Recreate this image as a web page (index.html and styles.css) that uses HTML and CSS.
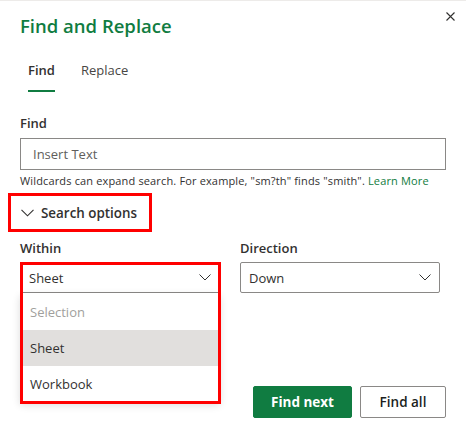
FILE: index.html
```html
<!DOCTYPE html>
<html lang="en">
<head>
<meta charset="utf-8">
<title>Find and Replace</title>
<link rel="stylesheet" href="styles.css">
</head>
<body>
<div class="dialog">
  <button class="close" aria-label="Close">
    <svg width="9" height="9" viewBox="0 0 9 9"><path d="M0.5 0.5L8.5 8.5M8.5 0.5L0.5 8.5" stroke="#323130" stroke-width="1.1" fill="none"/></svg>
  </button>
  <h1 class="title">Find and Replace</h1>
  <div class="tabs">
    <span class="tab active">Find</span>
    <span class="tab">Replace</span>
  </div>
  <label class="label first">Find</label>
  <div class="input">Insert Text</div>
  <p class="hint">Wildcards can expand search. For example, "sm?th" finds "smith". <a class="link">Learn More</a></p>
  <div class="options">
    <svg class="chev" width="13" height="8" viewBox="0 0 13 8"><path d="M0.5 0.8L6.5 6.8L12.5 0.8" stroke="#323130" stroke-width="1.1" fill="none"/></svg>
    <span>Search options</span>
  </div>
  <div class="grid">
    <div class="field">
      <label class="label">Within</label>
      <div class="combo-wrap">
        <div class="combo">
          <span>Sheet</span>
          <svg width="12" height="7" viewBox="0 0 12 7"><path d="M0.5 0.5L6 6L11.5 0.5" stroke="#323130" stroke-width="1" fill="none"/></svg>
        </div>
        <ul class="menu">
          <li class="disabled">Selection</li>
          <li class="selected">Sheet</li>
          <li>Workbook</li>
        </ul>
        <div class="mark"></div>
      </div>
    </div>
    <div class="field">
      <label class="label">Direction</label>
      <div class="combo">
        <span>Down</span>
        <svg width="12" height="7" viewBox="0 0 12 7"><path d="M0.5 0.5L6 6L11.5 0.5" stroke="#323130" stroke-width="1" fill="none"/></svg>
      </div>
    </div>
  </div>
  <div class="actions">
    <button class="btn primary">Find next</button>
    <button class="btn">Find all</button>
  </div>
</div>
</body>
</html>
```
FILE: styles.css
```css
* { box-sizing: border-box; }
html, body { margin: 0; padding: 0; background: #fff; }
body {
  font-family: "Open Sans", "Noto Sans", sans-serif;
  color: #323130;
  font-size: 13px;
}
.dialog {
  position: relative;
  width: 466px;
  height: 438px;
  border-top: 1px solid #edebe9;
  padding: 0 20px;
}
.close {
  position: absolute;
  top: 11px;
  left: 446px;
  width: 9px;
  height: 9px;
  padding: 0;
  border: 0;
  background: none;
  display: flex;
}
.title {
  margin: 11px 0 0;
  font-size: 18.5px;
  line-height: 28px;
  font-weight: 600;
  color: #107c41;
}
.tabs {
  display: flex;
  gap: 10px;
  margin-top: 10px;
}
.tab {
  position: relative;
  padding: 10px 8px 12px;
  line-height: 20px;
  font-size: 13px;
  color: #484644;
}
.tab.active { font-weight: 600; color: #323130; }
.tab.active::after {
  content: "";
  position: absolute;
  left: 8px;
  right: 8px;
  bottom: 0;
  height: 2px;
  background: #107c41;
}
.label {
  display: block;
  font-weight: 600;
  font-size: 13px;
  line-height: 20px;
  margin-bottom: 5px;
}
.label.first { margin-top: 21px; }
.input {
  height: 32px;
  border: 1px solid #8a8886;
  padding: 0 12px;
  line-height: 30px;
  color: #605e5c;
  font-size: 13px;
}
.hint {
  margin: 3px 0 0;
  font-size: 11px;
  letter-spacing: 0.15px;
  line-height: 16px;
  white-space: nowrap;
  color: #323130;
}
.link { color: #107c41; }
.options {
  display: flex;
  align-items: center;
  gap: 7px;
  width: 144px;
  height: 39px;
  margin: 4px 0 0 -12px;
  padding-left: 10px;
  border: 3px solid #ff0000;
  font-weight: 600;
  font-size: 13.4px;
}
.grid {
  display: grid;
  grid-template-columns: 200px 200px;
  column-gap: 20px;
  margin-top: 6px;
}
.field .label { margin-bottom: 4px; }
.combo-wrap { position: relative; }
.combo {
  display: flex;
  align-items: center;
  justify-content: space-between;
  height: 31px;
  border: 1px solid #8a8886;
  border-radius: 2px;
  padding: 0 8px;
  font-size: 13px;
}
.menu {
  position: absolute;
  top: 31px;
  left: 0;
  right: 0;
  margin: 0;
  padding: 1px 0 0;
  list-style: none;
  background: #fff;
  box-shadow: 0 3px 8px rgba(0,0,0,0.14);
}
.menu li {
  height: 36px;
  line-height: 36px;
  padding-left: 10px;
  font-size: 13px;
}
.menu li.disabled { color: #a19f9d; }
.menu li.selected { background: #e1dfdd; }
.mark {
  position: absolute;
  top: 0;
  left: 0;
  right: -1px;
  height: 142px;
  border: 3px solid #ff0000;
  pointer-events: none;
}
.actions {
  display: flex;
  justify-content: flex-end;
  gap: 8px;
  margin-top: 93px;
}
.btn {
  height: 32px;
  padding: 0;
  border: 1px solid #8a8886;
  border-radius: 2px;
  background: #fff;
  font-family: inherit;
  font-size: 13.5px;
  font-weight: 600;
  color: #201f1e;
  width: 86px;
}
.btn.primary {
  width: 99px;
  background: #107c41;
  border-color: #107c41;
  color: #fff;
  font-weight: 700;
}
```
